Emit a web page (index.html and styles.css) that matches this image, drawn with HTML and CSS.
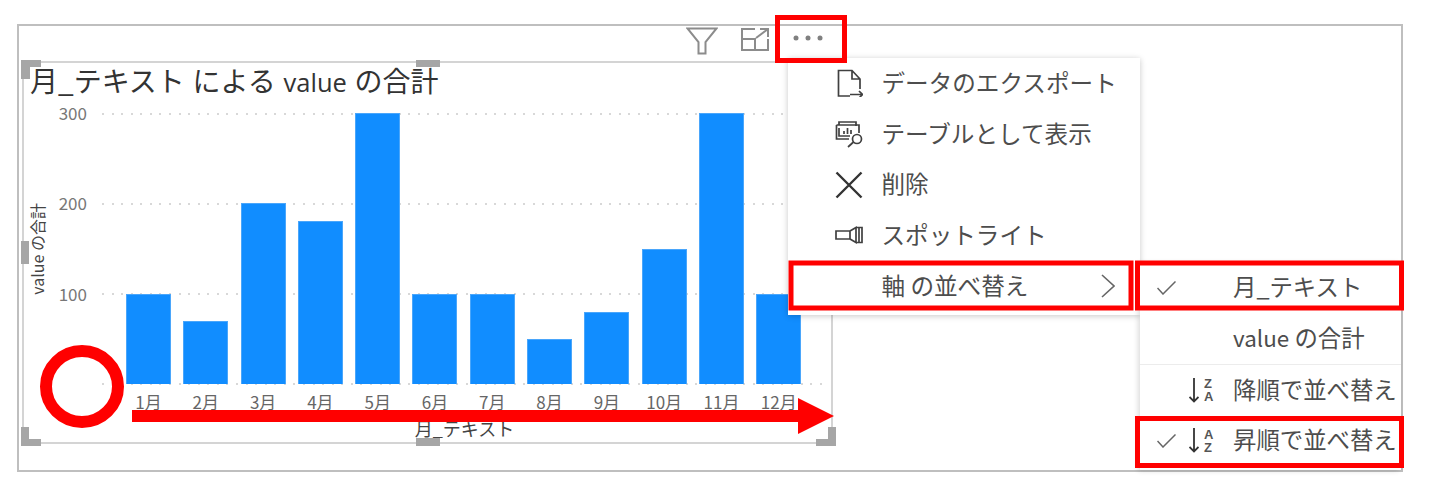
FILE: index.html
```html
<!DOCTYPE html>
<html>
<head>
  <meta charset="utf-8">
  <link rel="stylesheet" href="styles.css">
</head>
<body>
<div class="page">
  <div class="frame">
    <div class="toolbar">
      <svg class="tool" width="32" height="28" viewBox="0 0 32 28"><path d="M1.5 1.5H30.5L19.5 15V26.5H12.5V15Z"/></svg>
      <svg class="tool" width="28" height="24" viewBox="0 0 28 24"><path d="M14 2H1V23H27V12M1 12H14V23M15 11L27 2M19 2H27V10"/></svg>
      <svg class="tool dots" width="34" height="24" viewBox="0 0 34 24"><circle cx="4" cy="11" r="2.5"/><circle cx="16" cy="11" r="2.5"/><circle cx="28" cy="11" r="2.5"/></svg>
    </div>

    <div class="visual">
      <div class="visual-title">月_テキスト による <span class="latin">value</span> の合計</div>
      <div class="chart">
        <div class="y-title">value の合計</div>
        <div class="y-ticks">
          <div class="tick">300</div>
          <div class="tick">200</div>
          <div class="tick">100</div>
        </div>
        <div class="plot">
          <div class="grid-lines">
            <div class="grid-line"></div>
            <div class="grid-line"></div>
            <div class="grid-line"></div>
            <div class="grid-line"></div>
          </div>
          <div class="bars">
            <div class="bar" style="height:33.33%"></div>
            <div class="bar" style="height:23.33%"></div>
            <div class="bar" style="height:66.67%"></div>
            <div class="bar" style="height:60%"></div>
            <div class="bar" style="height:100%"></div>
            <div class="bar" style="height:33.33%"></div>
            <div class="bar" style="height:33.33%"></div>
            <div class="bar" style="height:16.67%"></div>
            <div class="bar" style="height:26.67%"></div>
            <div class="bar" style="height:50%"></div>
            <div class="bar" style="height:100%"></div>
            <div class="bar" style="height:33.33%"></div>
          </div>
        </div>
        <div class="x-labels">
          <div class="x-label">1月</div>
          <div class="x-label">2月</div>
          <div class="x-label">3月</div>
          <div class="x-label">4月</div>
          <div class="x-label">5月</div>
          <div class="x-label">6月</div>
          <div class="x-label">7月</div>
          <div class="x-label">8月</div>
          <div class="x-label">9月</div>
          <div class="x-label">10月</div>
          <div class="x-label">11月</div>
          <div class="x-label">12月</div>
        </div>
        <div class="x-title">月_テキスト</div>
      </div>
    </div>
  </div>

  <!-- resize handles on the visual -->
  <div class="handle h-tl"></div>
  <div class="handle h-top"></div>
  <div class="handle h-left"></div>
  <div class="handle h-bl"></div>
  <div class="handle h-bottom"></div>
  <div class="handle h-br"></div>

  <div class="menu">
    <div class="menu-row">
      <svg class="menu-icon" width="28" height="28" viewBox="0 0 28 28"><path d="M15 27H3.5V1.5H17L25 10V20M17 1.5V10H25M15 25.5H27.5M24 22L27.5 25.5L24 29"/></svg>
      <span>データのエクスポート</span>
    </div>
    <div class="menu-row">
      <svg class="menu-icon" width="28" height="28" viewBox="0 0 28 28"><path d="M4 5V2H21V6M1.5 5H24V13M1.5 5V19H14M4 8V16H15M9 14V11M12.5 14V8M16 14V10"/><circle cx="22" cy="19" r="4.5"/><path d="M18.5 22L13 27"/></svg>
      <span>テーブルとして表示</span>
    </div>
    <div class="menu-row">
      <svg class="menu-icon" width="28" height="28" viewBox="0 0 28 28"><path class="heavy" d="M1.5 1.5L26.5 26.5M26.5 1.5L1.5 26.5"/></svg>
      <span>削除</span>
    </div>
    <div class="menu-row">
      <svg class="menu-icon" width="28" height="18" viewBox="0 0 28 18"><path d="M1 5H15V13H1ZM15 5L21 1.5V16.5L15 13M21 1.5H27V16.5H21M24 1.5V16.5"/></svg>
      <span>スポットライト</span>
    </div>
    <div class="menu-row">
      <div class="menu-icon no-icon"></div>
      <span>軸 の並べ替え</span>
      <svg class="chevron" width="14" height="24" viewBox="0 0 14 24"><path d="M1 1L13 12L1 23"/></svg>
    </div>
  </div>

  <div class="submenu">
    <div class="sub-row">
      <svg class="check" width="19" height="14" viewBox="0 0 19 14"><path d="M0.5 7L6 13L18.5 0.5"/></svg>
      <div class="sort"></div>
      <span>月_テキスト</span>
    </div>
    <div class="sub-row">
      <div class="check"></div>
      <div class="sort"></div>
      <span><span class="small-latin">value</span> の合計</span>
    </div>
    <div class="sub-row with-rule">
      <div class="check"></div>
      <div class="sort">
        <svg width="10" height="25" viewBox="0 0 10 25"><path d="M5 0V23.5M0.5 19L5 23.5L9.5 19"/></svg>
        <div class="az"><span>Z</span><span>A</span></div>
      </div>
      <span>降順で並べ替え</span>
    </div>
    <div class="sub-row">
      <svg class="check" width="19" height="14" viewBox="0 0 19 14"><path d="M0.5 7L6 13L18.5 0.5"/></svg>
      <div class="sort">
        <svg width="10" height="25" viewBox="0 0 10 25"><path d="M5 0V23.5M0.5 19L5 23.5L9.5 19"/></svg>
        <div class="az"><span>A</span><span>Z</span></div>
      </div>
      <span>昇順で並べ替え</span>
    </div>
  </div>

  <!-- red annotations drawn over the screenshot -->
  <svg class="notes" width="1434" height="499" viewBox="0 0 1434 499">
    <rect x="777.5" y="17.5" width="67" height="43"/>
    <rect x="791" y="263" width="340" height="45"/>
    <rect x="1137.5" y="263" width="264" height="45"/>
    <rect x="1137.5" y="418.5" width="264" height="47"/>
    <ellipse cx="82" cy="386.5" rx="36" ry="35.5"/>
    <path class="arrow" d="M132 410H798V398L834 416L798 434V422H132Z"/>
  </svg>
</div>
</body>
</html>
```

FILE: styles.css
```css
* {
  box-sizing: border-box;
}

html, body {
  margin: 0;
  background: #fff;
}

body {
  font-family: "Noto Sans CJK JP", "Open Sans", sans-serif;
  color: #4d4d4d;
}

.page {
  position: relative;
  width: 1434px;
  height: 499px;
  padding: 24px 0 0 17px;
  overflow: hidden;
}

.frame {
  width: 1386px;
  height: 448px;
  border: 2px solid #bfbfbf;
}

/* toolbar above the visual */
.toolbar {
  display: flex;
  justify-content: flex-end;
  gap: 23px;
  width: 811px;
  height: 35px;
  margin-left: 3px;
  padding: 1px 7px 0 0;
}

.tool {
  fill: none;
  stroke: #8c8c8c;
  stroke-width: 2;
}

.dots {
  fill: #808080;
  stroke: none;
}

/* visual */
.visual {
  width: 811px;
  height: 383px;
  margin-left: 3px;
  border: 2px solid #d4d4d4;
}

.visual-title {
  height: 38px;
  margin-bottom: 12px;
  padding-left: 6px;
  font-size: 28px;
  line-height: 34px;
  word-spacing: 1.5px;
  color: #333;
  white-space: nowrap;
}

.latin {
  font-family: "Open Sans", sans-serif;
  font-size: 25.5px;
}

.chart {
  display: grid;
  grid-template-columns: 26px 37px 720px;
  grid-template-rows: 272px 33px 20px;
  column-gap: 0;
}

.y-title {
  writing-mode: vertical-rl;
  text-orientation: sideways;
  transform: rotate(180deg);
  justify-self: center;
  align-self: center;
  font-size: 16px;
  line-height: 16px;
  color: #444;
  white-space: nowrap;
}

.y-ticks {
  margin-top: -1px;
  font-size: 17px;
  color: #777;
  text-align: right;
}

.tick {
  height: 90.33px;
  line-height: 1px;
}

.plot {
  display: grid;
  margin-left: 15px;
  width: 720px;
}

.grid-lines, .bars {
  grid-area: 1 / 1;
}

.grid-lines {
  display: flex;
  flex-direction: column;
  justify-content: space-between;
}

.grid-line {
  height: 2px;
  background: repeating-linear-gradient(90deg, #d8d8d8 0, #d8d8d8 2px, transparent 2px, transparent 9.57px);
}

.bars {
  display: flex;
  align-items: flex-end;
  gap: 12.3px;
  padding-left: 24px;
  height: 271px;
}

.bar {
  width: 45px;
  background: #118dff;
  border: 1px solid #4aa6fb;
  border-bottom: 0;
}

.x-labels {
  grid-column: 3;
  display: flex;
  gap: 12.3px;
  padding: 5px 0 0 39px;
  font-size: 17px;
  line-height: 24px;
  color: #666;
}

.x-label {
  width: 45px;
  text-align: center;
  white-space: nowrap;
}

.x-title {
  grid-column: 3;
  padding-left: 35px;
  text-align: center;
  font-size: 18px;
  line-height: 20px;
  color: #444;
}

/* resize handles */
.handle {
  position: absolute;
  border: 0 solid #a6a6a6;
}

.h-tl {
  left: 21px;
  top: 60px;
  width: 20px;
  height: 19px;
  border-left-width: 9px;
  border-top-width: 7px;
}

.h-top {
  left: 416px;
  top: 60px;
  width: 24px;
  height: 7px;
  background: #a6a6a6;
}

.h-left {
  left: 21px;
  top: 241px;
  width: 8px;
  height: 23px;
  background: #a6a6a6;
}

.h-bl {
  left: 21px;
  top: 427px;
  width: 20px;
  height: 19px;
  border-left-width: 8px;
  border-bottom-width: 7px;
}

.h-bottom {
  left: 416px;
  top: 438px;
  width: 24px;
  height: 8px;
  background: #a6a6a6;
}

.h-br {
  left: 816px;
  top: 427px;
  width: 20px;
  height: 19px;
  border-right-width: 8px;
  border-bottom-width: 7px;
}

/* context menu */
.menu {
  position: absolute;
  left: 788px;
  top: 58px;
  width: 352px;
  height: 257px;
  background: #fff;
  box-shadow: 0 1px 6px rgba(0, 0, 0, 0.22);
}

.menu-row {
  display: flex;
  align-items: center;
  gap: 18.5px;
  height: 50.7px;
  padding-left: 47px;
  font-size: 23.6px;
  white-space: nowrap;
}

.menu-row > span {
  margin-bottom: 3px;
}

.menu-icon {
  flex: none;
  width: 28px;
  fill: none;
  stroke: #404040;
  stroke-width: 1.7;
}

.menu-icon .heavy {
  stroke: #333;
  stroke-width: 2.4;
}

.chevron {
  margin-left: auto;
  margin-right: 25px;
  fill: none;
  stroke: #666;
  stroke-width: 1.6;
}

/* submenu */
.submenu {
  position: absolute;
  left: 1140px;
  top: 262px;
  width: 261px;
  height: 208px;
  background: #fff;
  box-shadow: -2px 1px 5px rgba(0, 0, 0, 0.14);
}

.sub-row {
  display: flex;
  align-items: center;
  height: 51px;
  padding-left: 17px;
  font-size: 23.4px;
  white-space: nowrap;
}

.sub-row > span {
  margin-bottom: 3px;
}

.small-latin {
  font-size: 22.4px;
}

.with-rule {
  border-top: 1px solid #ececec;
}

.check {
  flex: none;
  width: 19px;
  fill: none;
  stroke: #666;
  stroke-width: 1.5;
}

.sort {
  flex: none;
  display: flex;
  align-items: center;
  gap: 5px;
  width: 22px;
  margin: 0 22px 0 13px;
}

.sort svg {
  flex: none;
  fill: none;
  stroke: #333;
  stroke-width: 1.8;
}

.az {
  display: flex;
  flex-direction: column;
  font-family: "Liberation Sans", sans-serif;
  font-size: 13px;
  font-weight: 700;
  line-height: 13px;
  color: #555;
}

/* annotations */
.notes {
  position: absolute;
  left: 0;
  top: 0;
  fill: none;
  stroke: #f00;
  stroke-width: 5;
}

.notes ellipse {
  stroke-width: 12;
}

.notes .arrow {
  fill: #f00;
  stroke: none;
}
```
